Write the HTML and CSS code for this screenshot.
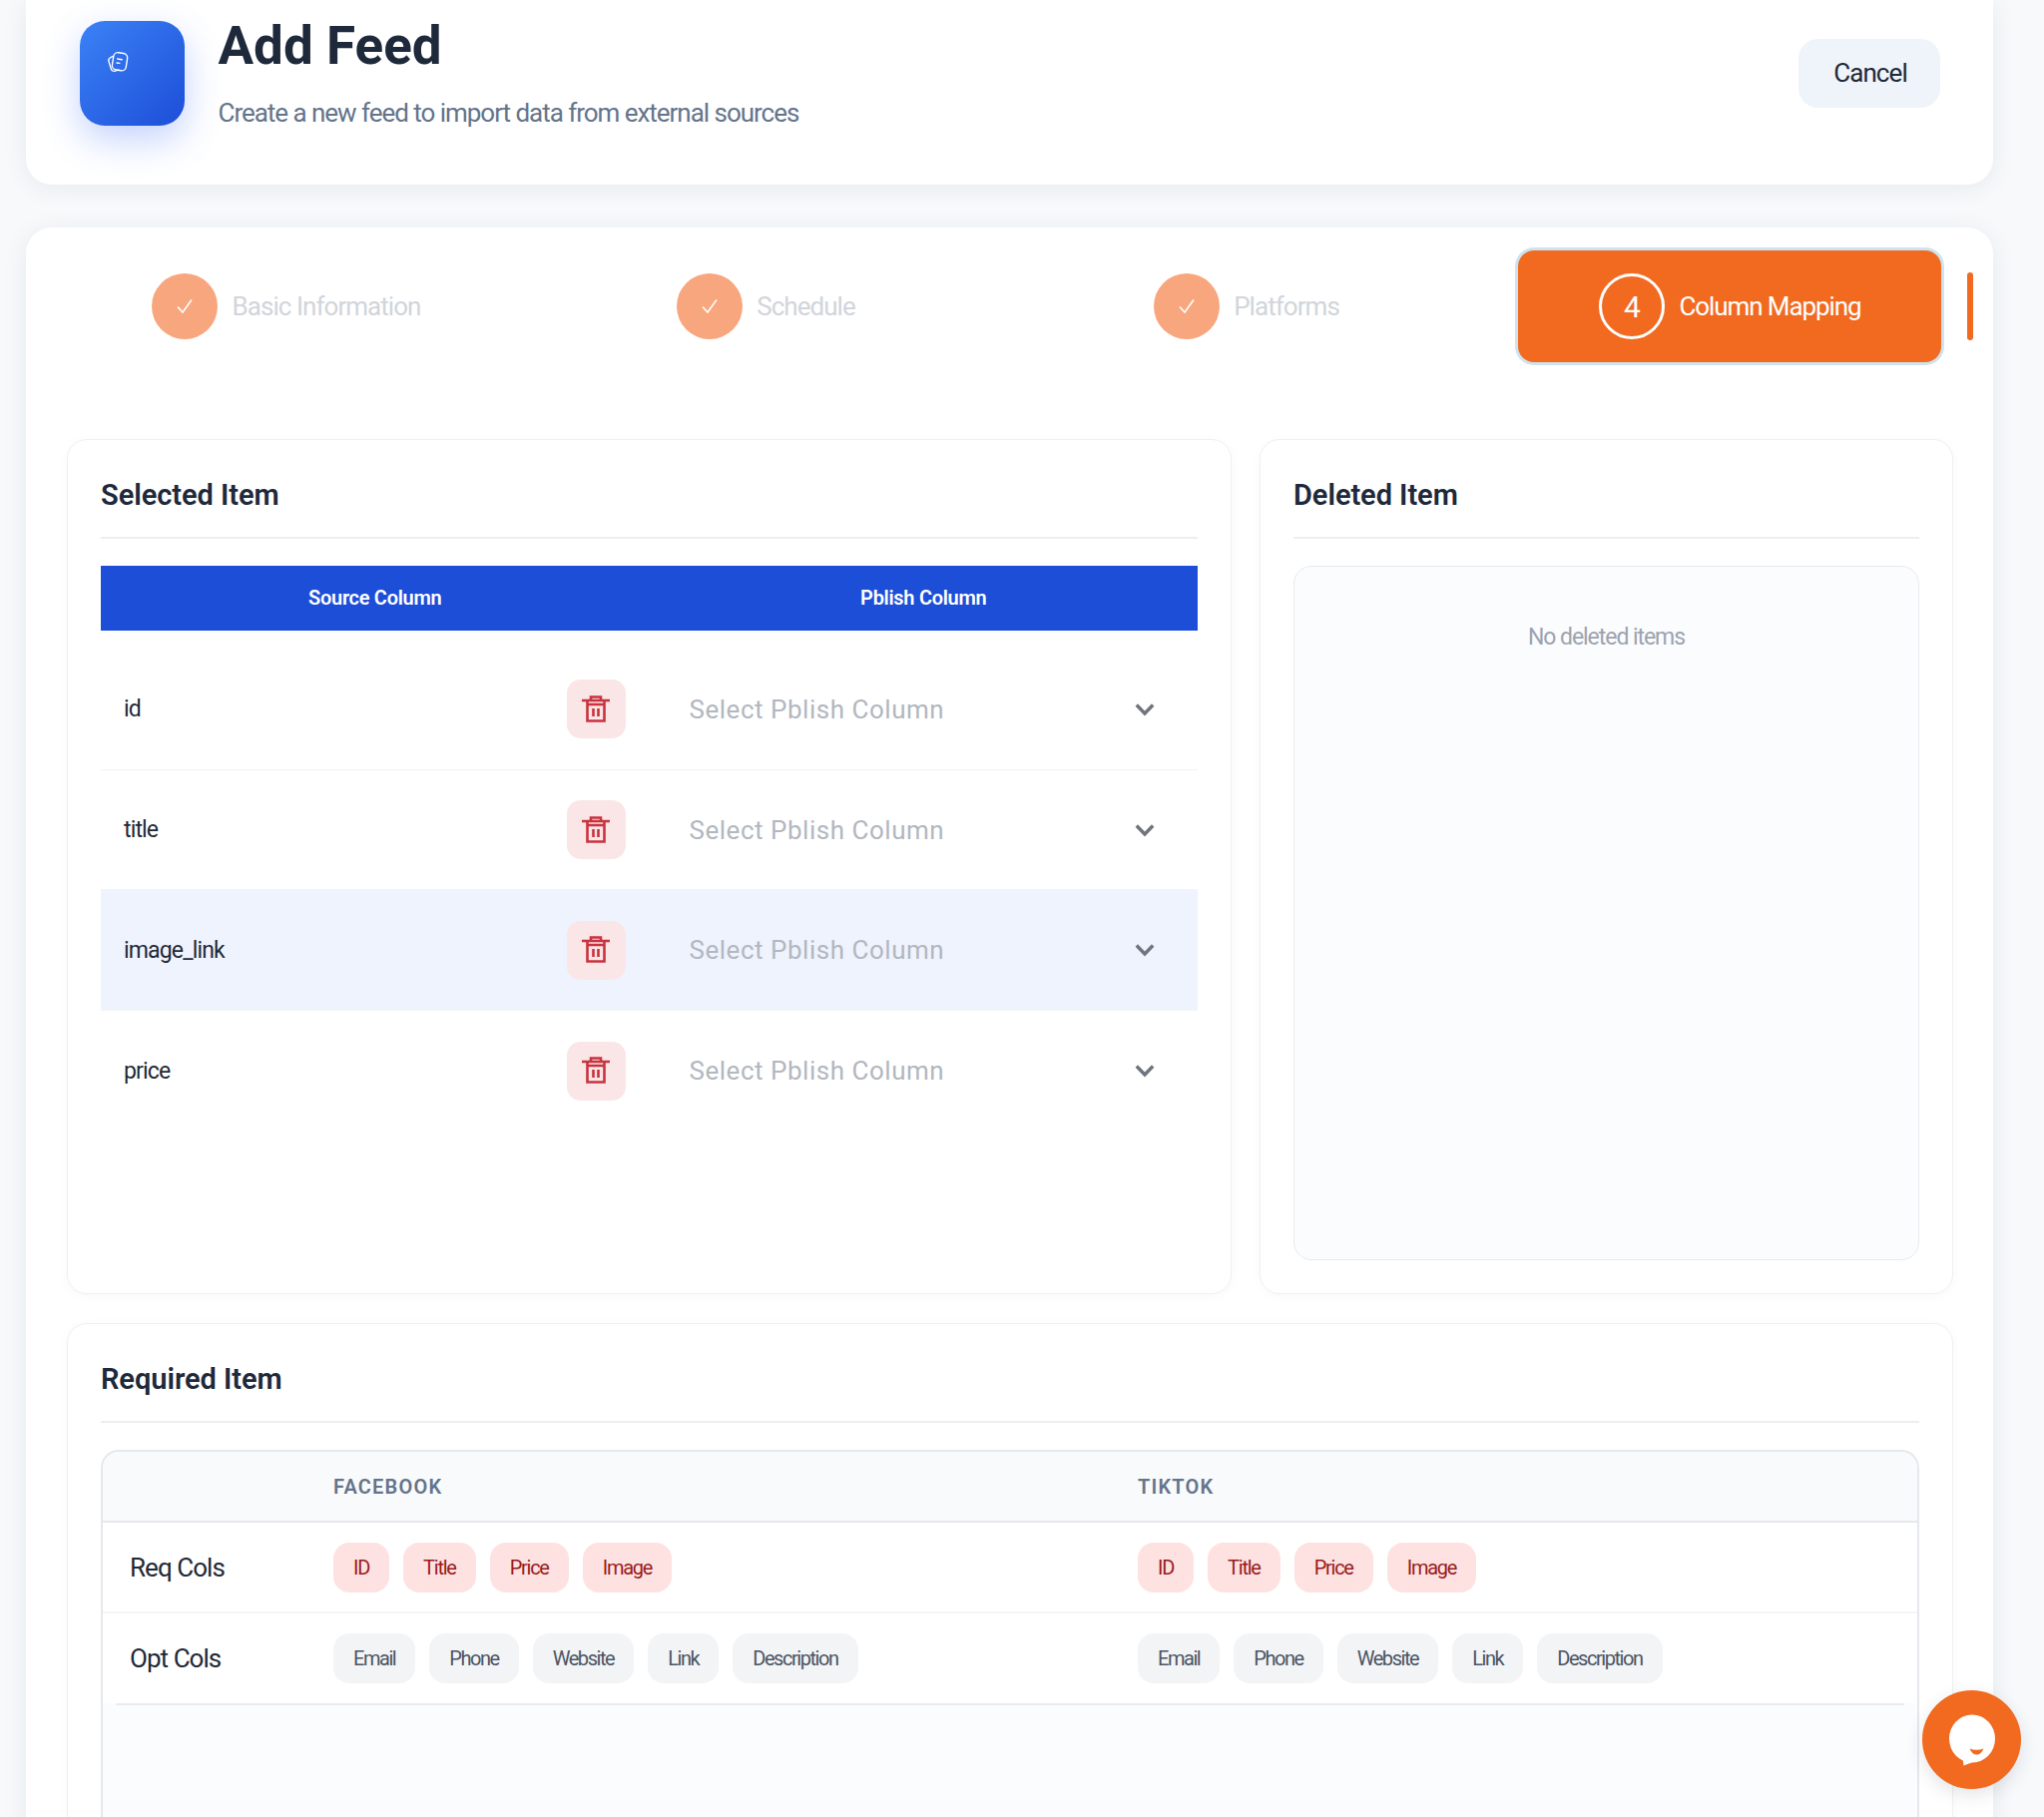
FILE: index.html
```html
<!DOCTYPE html>
<html lang="en">
<head>
<meta charset="utf-8">
<title>Add Feed</title>
<link rel="stylesheet" href="styles.css">
</head>
<body>
<div class="page">
  <header class="card head-card">
    <div class="hero-icon">
      <svg class="hero-glyph" width="24" height="24" viewBox="0 0 24 24" fill="none" stroke="#fff" stroke-width="1.4" stroke-linecap="round" stroke-linejoin="round">
        <path d="M6.600 5.600 4.200 7A3 3 0 0 0 3 10.600l2.400 7.600a3 3 0 0 0 3.800 2l3.600-1.200"/>
        <rect x="7" y="2" width="14" height="17.500" rx="4.500" transform="rotate(9 14 11)"/>
        <path d="M11.600 8l4.600.7M11 12l2.800.4"/>
      </svg>
    </div>
    <div class="head-text">
      <h1 class="head-title">Add Feed</h1>
      <p class="head-sub">Create a new feed to import data from external sources</p>
    </div>
    <button class="cancel">Cancel</button>
  </header>

  <main class="card main-card">
    <nav class="stepper">
      <div class="step step-one"><span class="dot"><svg width="18" height="16" viewBox="0 0 18 16" fill="none" stroke="#fff" stroke-width="1.6"><path d="M2 8.500 7 14 16 1.500"/></svg></span><span class="step-label">Basic Information</span></div>
      <div class="step step-two"><span class="dot"><svg width="18" height="16" viewBox="0 0 18 16" fill="none" stroke="#fff" stroke-width="1.6"><path d="M2 8.500 7 14 16 1.500"/></svg></span><span class="step-label">Schedule</span></div>
      <div class="step step-three"><span class="dot"><svg width="18" height="16" viewBox="0 0 18 16" fill="none" stroke="#fff" stroke-width="1.6"><path d="M2 8.500 7 14 16 1.500"/></svg></span><span class="step-label">Platforms</span></div>
      <div class="step-active"><span class="dot-num">4</span><span class="active-label">Column Mapping</span></div>
      <span class="step-bar"></span>
    </nav>

    <div class="panels">
      <section class="panel">
        <h2 class="panel-title">Selected Item</h2>
        <div class="map-head"><span>Source Column</span><span>Pblish Column</span></div>
        <div class="map-rows">
          <div class="map-row"><div class="src"><span>id</span><button class="trash"><svg width="32" height="32" viewBox="0 0 32 32" fill="none" stroke="#c9323f" stroke-width="2.6"><path d="M2 7h28M11 6V3.500h10V6M7.500 7v20.500h17V7M7 11h18M13.500 15v8M18.500 15v8"/></svg></button></div><div class="pick"><span>Select Pblish Column</span><svg class="chev" width="20" height="14" viewBox="0 0 20 14" fill="none" stroke="#6f747d" stroke-width="3.400"><path d="M1.800 2.500 10 11l8.200-8.500"/></svg></div></div>
          <div class="map-row"><div class="src"><span>title</span><button class="trash"><svg width="32" height="32" viewBox="0 0 32 32" fill="none" stroke="#c9323f" stroke-width="2.6"><path d="M2 7h28M11 6V3.500h10V6M7.500 7v20.500h17V7M7 11h18M13.500 15v8M18.500 15v8"/></svg></button></div><div class="pick"><span>Select Pblish Column</span><svg class="chev" width="20" height="14" viewBox="0 0 20 14" fill="none" stroke="#6f747d" stroke-width="3.400"><path d="M1.800 2.500 10 11l8.200-8.500"/></svg></div></div>
          <div class="map-row is-hover"><div class="src"><span>image_link</span><button class="trash"><svg width="32" height="32" viewBox="0 0 32 32" fill="none" stroke="#c9323f" stroke-width="2.6"><path d="M2 7h28M11 6V3.500h10V6M7.500 7v20.500h17V7M7 11h18M13.500 15v8M18.500 15v8"/></svg></button></div><div class="pick"><span>Select Pblish Column</span><svg class="chev" width="20" height="14" viewBox="0 0 20 14" fill="none" stroke="#6f747d" stroke-width="3.400"><path d="M1.800 2.500 10 11l8.200-8.500"/></svg></div></div>
          <div class="map-row is-last"><div class="src"><span>price</span><button class="trash"><svg width="32" height="32" viewBox="0 0 32 32" fill="none" stroke="#c9323f" stroke-width="2.6"><path d="M2 7h28M11 6V3.500h10V6M7.500 7v20.500h17V7M7 11h18M13.500 15v8M18.500 15v8"/></svg></button></div><div class="pick"><span>Select Pblish Column</span><svg class="chev" width="20" height="14" viewBox="0 0 20 14" fill="none" stroke="#6f747d" stroke-width="3.400"><path d="M1.800 2.500 10 11l8.200-8.500"/></svg></div></div>
        </div>
      </section>

      <section class="panel">
        <h2 class="panel-title">Deleted Item</h2>
        <div class="deleted-box"><p class="deleted-empty">No deleted items</p></div>
      </section>

      <section class="panel panel-wide">
        <h2 class="panel-title">Required Item</h2>
        <div class="req-table">
          <div class="req-row req-head"><span></span><span>FACEBOOK</span><span>TIKTOK</span></div>
          <div class="req-row req-body">
            <span class="req-label">Req Cols</span>
            <div class="chips"><span class="chip chip-red">ID</span><span class="chip chip-red">Title</span><span class="chip chip-red">Price</span><span class="chip chip-red">Image</span></div>
            <div class="chips"><span class="chip chip-red">ID</span><span class="chip chip-red">Title</span><span class="chip chip-red">Price</span><span class="chip chip-red">Image</span></div>
          </div>
          <div class="req-row req-body req-body-last">
            <span class="req-label">Opt Cols</span>
            <div class="chips"><span class="chip">Email</span><span class="chip">Phone</span><span class="chip">Website</span><span class="chip">Link</span><span class="chip">Description</span></div>
            <div class="chips"><span class="chip">Email</span><span class="chip">Phone</span><span class="chip">Website</span><span class="chip">Link</span><span class="chip">Description</span></div>
          </div>
          <div class="req-rule"></div>
        </div>
      </section>
    </div>
  </main>
</div>

<div class="chat">
  <svg width="52" height="54" viewBox="0 0 52 54" aria-hidden="true">
    <ellipse cx="26" cy="25.500" rx="23" ry="24" fill="#fff"/>
    <path fill="#fff" d="M16.500 44 17.500 52.500 32 47Z"/>
    <path fill="#f16a20" d="M23.500 35.500Q30.500 38 37.500 35.500 35 41.500 30.500 41.500 26 41.500 23.500 35.500Z"/>
  </svg>
</div>
</body>
</html>
```

FILE: styles.css
```css
* { box-sizing: border-box; }
html, body { margin: 0; height: 1821px; overflow: hidden; }
body {
  background: #f7f9fb;
  font-family: Roboto, "Liberation Sans", sans-serif;
  color: #1f2937;
}
button { font-family: inherit; border: 0; padding: 0; }
h1, h2, p { margin: 0; }

.page { padding: 0 51px 0 26px; display: flex; flex-direction: column; gap: 43px; }
.card { background: #fff; border-radius: 26px; box-shadow: 0 3px 26px rgba(30, 41, 59, .07); }

.head-card { height: 185px; border-radius: 0 0 26px 26px; padding: 21px 53px 0 53.500px; display: flex; align-items: flex-start; }
.hero-icon {
  width: 105.500px; height: 105px; border-radius: 25px; flex: none;
  background: linear-gradient(135deg, #3b82f6, #1d4ed8);
  box-shadow: 0 14px 36px rgba(59, 110, 246, .3);
  padding: 30px 0 0 26px;
}
.hero-glyph { display: block; }
.head-text { margin: -11px 0 0 33.500px; flex: 1; }
.head-title { font-size: 53px; line-height: 72px; font-weight: 700; color: #1e293b; }
.head-sub { margin-top: 13px; font-size: 26px; line-height: 36px; color: #64748b; letter-spacing: -1.03px; }
.cancel {
  width: 142px; height: 69px; margin-top: 18px; border-radius: 20px;
  background: #eff3fa; color: #1f2937; font-size: 26px; letter-spacing: -.9px; padding: 0 0 2px 2px;
}

.main-card { height: 1700px; padding: 23px 40px 0 41px; }
.stepper { display: flex; align-items: center; height: 112px; margin-left: -18px; }
.step { display: flex; align-items: center; justify-content: center; gap: 14px; flex: none; }
.step-one { width: 476px; }
.step-two { width: 485px; }
.step-three { width: 478px; margin-right: 33px; }
.dot { width: 66px; height: 66px; border-radius: 50%; background: #f8a67d; display: flex; align-items: center; justify-content: center; flex: none; }
.step-label { font-size: 26px; color: #d1d5db; letter-spacing: -.95px; }
.step-active {
  flex: none; width: 424px; height: 112px; border-radius: 16px; background: #f16a20;
  box-shadow: 0 0 0 3px #cfe3ee;
  display: flex; align-items: center; justify-content: center; gap: 15px;
}
.dot-num {
  width: 66px; height: 66px; border-radius: 50%; border: 3px solid #fff; color: #fff;
  font-size: 30px; display: flex; align-items: center; justify-content: center; padding-left: 2px;
}
.active-label { color: #fff; font-size: 26px; letter-spacing: -1.1px; }
.step-bar { flex: none; width: 6px; height: 68px; border-radius: 3px; background: #f16a20; margin-left: 26px; }

.panels { margin-top: 77px; display: grid; grid-template-columns: 1167px 695px; column-gap: 28px; row-gap: 29px; }
.panel {
  height: 857px; background: #fff; border: 1px solid #eef0f3; border-radius: 20px;
  padding: 32px 33px 33px; display: flex; flex-direction: column;
  box-shadow: 0 2px 12px rgba(30, 41, 59, .03);
}
.panel-wide { grid-column: 1 / -1; }
.panel-title {
  font-size: 29px; line-height: 46px; font-weight: 600; color: #1e293b; letter-spacing: -.05px;
  padding-bottom: 19px; border-bottom: 2px solid #eceef1; margin-bottom: 27px;
  flex: none;
}

.map-head { height: 65px; padding-bottom: 2px; background: #1d4ed8; color: #fff; font-size: 20px; font-weight: 600; letter-spacing: -.3px; display: grid; grid-template-columns: 1fr 1fr; align-items: center; text-align: center; flex: none; }
.map-rows { padding-top: 19px; }
.map-row { height: 120.700px; display: grid; grid-template-columns: 1fr 1fr; border-bottom: 1px solid #f1f3f6; align-items: center; }
.is-hover { background: #eff3fe; }
.is-last { border-bottom: 0; }
.src { display: flex; align-items: center; justify-content: space-between; padding: 0 24px 0 23px; font-size: 23px; letter-spacing: -.85px; color: #1f2937; }
.trash { width: 59px; height: 59px; border-radius: 14px; background: #fae6e6; display: flex; align-items: center; justify-content: center; }
.pick { display: flex; align-items: center; justify-content: space-between; padding: 0 43px 0 40px; font-size: 26px; color: #b2b7c0; letter-spacing: .52px; }
.chev { display: block; }

.deleted-box { flex: 1; background: #fbfcfe; border: 1px solid #e8eaee; border-radius: 18px; padding-top: 55px; text-align: center; }
.deleted-empty { font-size: 23px; line-height: 32px; color: #9ca3af; letter-spacing: -1.05px; }

.req-table { height: 600px; background: #fbfcfe; border: 2px solid #e5e8ec; border-bottom: 0; border-radius: 18px 18px 0 0; flex: none; }
.req-row { display: grid; grid-template-columns: 231px 806px 1fr; align-items: center; }
.req-head { height: 71px; background: #f9fafb; border-radius: 16px 16px 0 0; border-bottom: 2px solid #e5e8ec; font-size: 20px; font-weight: 600; color: #64748b; letter-spacing: 1.2px; }
.req-body { height: 90.500px; background: #fff; border-bottom: 2px solid #f4f5f7; padding-top: 1px; }
.req-body-last { border-bottom: 0; }
.req-rule { height: 2px; background: #e8ebef; margin: 0 13px; }
.req-label { padding-left: 27px; font-size: 26px; color: #1f2937; letter-spacing: -.95px; }
.chips { display: flex; gap: 14px; }
.chip { height: 50px; padding: 0 20px; border-radius: 16px; background: #f3f4f6; color: #4b5563; font-size: 20px; display: flex; align-items: center; letter-spacing: -1.45px; }
.chip-red { background: #fee2e2; color: #991b1b; letter-spacing: -1.25px; }

.chat {
  position: fixed; left: 1926px; top: 1694px; width: 99px; height: 99px; border-radius: 50%;
  background: #f16a20; display: flex; align-items: center; justify-content: center;
  box-shadow: 0 6px 18px rgba(30, 41, 59, .12);
}
```
